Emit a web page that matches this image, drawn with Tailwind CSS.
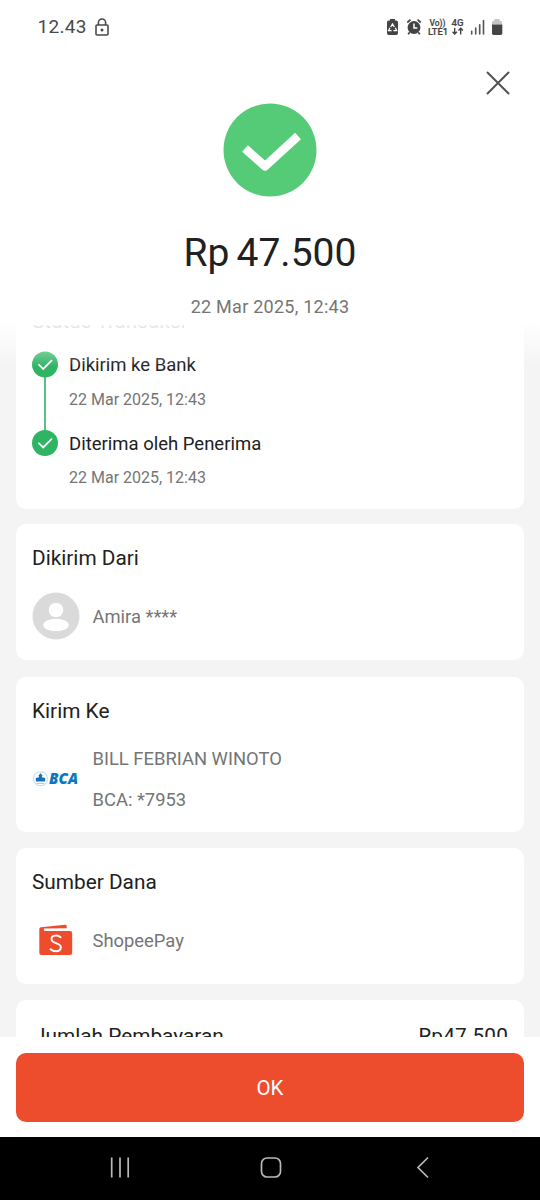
<!DOCTYPE html>
<html lang="id">
<head>
<meta charset="utf-8">
<meta name="viewport" content="width=device-width, initial-scale=1">
<title>Rp 47.500</title>
<script src="https://cdn.jsdelivr.net/npm/@tailwindcss/browser@4"></script>
</head>
<body class="bg-white">
<div class="flex h-[1200px] w-[540px] flex-col overflow-hidden bg-white font-[Roboto,sans-serif] text-[#212121]">

  <!-- Status bar -->
  <div class="flex h-[54px] shrink-0 items-center justify-between pr-[36px] pl-[37.500px] text-[#4a4a4a]">
    <div class="flex items-center gap-[7.500px]">
      <span class="w-[50px] text-[19px] leading-[24px] tracking-[0.3px]">12.43</span>
      <svg class="h-[18px] w-[14px]" viewBox="0 0 14 18" fill="none" stroke="currentColor" stroke-width="1.6"><rect x="1" y="7" width="12" height="10" rx="1"/><path d="M3.400 7V4.600a3.600 3.600 0 0 1 7.200 0V7"/><circle cx="7" cy="12" r="1.500" fill="currentColor" stroke="none"/></svg>
    </div>
    <svg class="h-[20px] w-[118px]" viewBox="386 17 118 20" fill="#444">
      <path d="M390 20.600v-1.600h5v1.600h1.200q1.800 0 1.800 1.800v10.800q0 1.800-1.800 1.800h-7.400q-1.800 0-1.800-1.800v-10.800q0-1.800 1.800-1.800z"/>
      <path d="M390.700 27l1.800-3 1.800 3M395.300 27.800l1.300 2.800h-3.200M391.600 30.600h-3l1.300-2.800" fill="none" stroke="#fff" stroke-width="1.300"/>
      <circle cx="414" cy="27.500" r="6.400"/><path d="M407.300 22.500l3.200-2.800M420.700 22.500l-3.200-2.800M409.800 32.300l-1.700 2M418.200 32.300l1.700 2" stroke="#444" stroke-width="1.700"/><path d="M414 23.500v4.500h3.300" fill="none" stroke="#fff" stroke-width="1.500"/>
      <g font-family="Roboto, sans-serif" font-weight="500" font-size="9.300" stroke="#444" stroke-width=".2">
        <text x="429.500" y="26" textLength="16" lengthAdjust="spacingAndGlyphs">Vo))</text><text x="428" y="34.800" textLength="20" lengthAdjust="spacingAndGlyphs">LTE1</text><text x="451.500" y="26.200" textLength="12" lengthAdjust="spacingAndGlyphs">4G</text>
      </g>
      <path d="M454.700 28v6M452.500 31.800l2.200 2.300 2.200-2.300M460.700 34.500v-6M458.500 30.600l2.200-2.300 2.200 2.300" fill="none" stroke="#444" stroke-width="1.400"/>
      <path d="M471.700 34v-2.700M475.700 34v-6M479.700 34v-9.200M483.500 34V20.500" stroke="#555" stroke-width="1.600" stroke-linecap="round"/>
      <path d="M492 24.500v-2q0-1.700 1.700-1.700h.800v-1.800h5v1.800h.800q1.700 0 1.700 1.700v2z" fill="#c4c4c4"/><path d="M492 24.500h10.300v8.800q0 1.700-1.700 1.700h-7q-1.600 0-1.600-1.700z"/>
    </svg>
  </div>

  <!-- Receipt header -->
  <header class="flex h-[271px] shrink-0 flex-col">
    <div class="flex h-[50px] justify-end pt-[16px] pr-[29px]">
      <svg class="size-[26px]" viewBox="0 0 26 26" fill="none" stroke="#505050" stroke-width="1.900" stroke-linecap="round"><path d="M2.500 2.500l21 21M23.500 2.500l-21 21"/></svg>
    </div>
    <svg class="mx-auto -mt-px size-[94px] shrink-0" viewBox="223 103 94 94"><circle cx="270" cy="150" r="46.500" fill="#55cb78"/><path d="M245 148.500L265 166.300L298 136" fill="none" stroke="#fff" stroke-width="8.600" stroke-linejoin="round"/></svg>
    <div class="mt-[30px] text-center text-[39px] leading-[52px]">Rp<span class="ml-[7px]">47.500</span></div>
    <div class="mt-[16px] text-center text-[18px] leading-[24px] tracking-[0.26px] text-[#757575]">22 Mar 2025, 12:43</div>
  </header>

  <!-- Scrolling details -->
  <main class="relative h-[712px] shrink-0 overflow-hidden bg-[#f4f4f4] px-[16px]">
    <section class="h-[183.500px] rounded-b-[10px] bg-white px-[16px]">
      <div class="h-[25px] overflow-hidden"><h2 class="-mt-[16px] text-[20.8px] leading-[24px] text-[#212121]/80">Status Transaksi</h2></div>
      <div class="flex gap-[11px]">
        <svg class="mt-px h-[108px] w-[26px]" viewBox="0 0 26 108" fill="none"><path d="M13 26v54" stroke="#2fb464" stroke-width="1.600"/><circle cx="13" cy="13.500" r="13" fill="#2fb464"/><circle cx="13" cy="92" r="13" fill="#2fb464"/><path d="M7 13.800l4.200 4.200 8.300-8.300M7 92.300l4.200 4.200 8.300-8.300" stroke="#fff" stroke-width="1.800" stroke-linecap="round"/></svg>
        <div class="pt-[3px]">
          <div class="text-[18.5px] leading-[24px]">Dikirim ke Bank</div>
          <div class="mt-[11px] text-[16px] leading-[24px] text-[#757575]">22 Mar 2025, 12:43</div>
          <div class="mt-[20px] text-[18.5px] leading-[24px]">Diterima oleh Penerima</div>
          <div class="mt-[10px] text-[16px] leading-[24px] text-[#757575]">22 Mar 2025, 12:43</div>
        </div>
      </div>
    </section>

    <section class="mt-[15.500px] h-[136px] rounded-[10px] bg-white px-[16px] pt-[22px]">
      <h2 class="text-[20.8px] leading-[24px]">Dikirim Dari</h2>
      <div class="mt-[22px] flex items-center gap-[12.500px]">
        <svg class="size-[48px]" viewBox="0 0 48 48"><circle cx="24" cy="24" r="23.500" fill="#dadada"/><circle cx="24" cy="18" r="7.300" fill="#fff"/><ellipse cx="24" cy="33" rx="12.700" ry="6.200" fill="#fff"/></svg>
        <span class="pt-[2px] text-[18.4px] leading-[24px] text-[#757575]">Amira ****</span>
      </div>
    </section>

    <section class="mt-[16.500px] h-[155.500px] rounded-[10px] bg-white px-[16px] pt-[22px]">
      <h2 class="text-[20.8px] leading-[24px]">Kirim Ke</h2>
      <div class="mt-[24px] flex items-center gap-[12.500px]">
        <svg class="size-[48px]" viewBox="0 0 48 48"><rect x="1.800" y="17" width="13.500" height="13.500" rx="5.500" fill="#fff" stroke="#a9d0e3" stroke-width=".8"/><path d="M8.500 18.200l2 2.400-.7 1.700 3.400.6-.1 3.600H4l-.2-3.600 3.400-.6-.7-1.700z" fill="#1472b2"/><path d="M4.500 28.400h8" stroke="#8bbfdb" stroke-width=".8"/><text x="17" y="29.300" font-family="Open Sans, sans-serif" font-weight="800" font-style="italic" font-size="15" textLength="29" lengthAdjust="spacingAndGlyphs" fill="#0b78bd">BCA</text></svg>
        <div class="text-[18.4px] leading-[24px] text-[#757575]">
          <div>BILL FEBRIAN WINOTO</div>
          <div class="mt-[17.500px]">BCA: *7953</div>
        </div>
      </div>
    </section>

    <section class="mt-[16px] h-[136px] rounded-[10px] bg-white px-[16px] pt-[22px]">
      <h2 class="text-[20.8px] leading-[24px]">Sumber Dana</h2>
      <div class="mt-[22px] flex items-center gap-[12.500px]">
        <svg class="size-[48px]" viewBox="0 0 48 48"><path d="M9 11.200l24-2.400q1.700-.1 1.700 1.400v2.700h-21q-2 0-2 .9 0 1.200 2 1.200H38q2.200 0 2.200 2.200V36.800q0 2.200-2.200 2.200H9.500q-2.200 0-2.200-2.200V13q0-1.700 1.700-1.800z" fill="#ee4d2d"/><path d="M12 13.200l22.300-.3v1.200" stroke="#fff" stroke-width="1.300" fill="none"/><path d="M28.600 21.300q-2-1.900-4.700-1.900-4.400.2-4.400 3.700 0 2.600 4.400 4 5 1.500 5 4.300-.3 3.800-4.900 3.900-3.200 0-5.500-2" fill="none" stroke="#fff" stroke-width="1.900" stroke-linecap="round"/></svg>
        <span class="pt-[2px] text-[18.4px] leading-[24px] text-[#757575]">ShopeePay</span>
      </div>
    </section>

    <section class="mt-[16px] flex h-[136px] justify-between rounded-[10px] bg-white px-[16px] pt-[24px] text-[20.8px] leading-[24px]">
      <h2 class="pl-[2px]">Jumlah Pembayaran</h2>
      <span class="tracking-[0.15px]">Rp47.500</span>
    </section>

    <!-- Fade under the header -->
    <div class="absolute inset-x-0 top-0 h-[42px] bg-linear-to-b from-white/90 to-white/0"></div>
  </main>

  <footer class="h-[100px] shrink-0 bg-white px-[16px] pt-[16px]">
    <button class="h-[69px] w-full rounded-[10px] bg-[#ee4d2d] text-[20.5px] leading-[24px] text-white">OK</button>
  </footer>

  <!-- System navigation -->
  <nav class="flex h-[63px] shrink-0 items-center bg-black">
    <svg class="h-[63px] w-[540px]" viewBox="0 1137 540 63" fill="none" stroke="#b9b9b9" stroke-width="1.700"><path d="M111.700 1157.500v20M120 1157.500v20M128.200 1157.500v20"/><rect x="261.500" y="1158" width="19" height="19" rx="5.500"/><path d="M428 1157.500l-10 10 10 10"/></svg>
  </nav>
</div>
</body>
</html>
